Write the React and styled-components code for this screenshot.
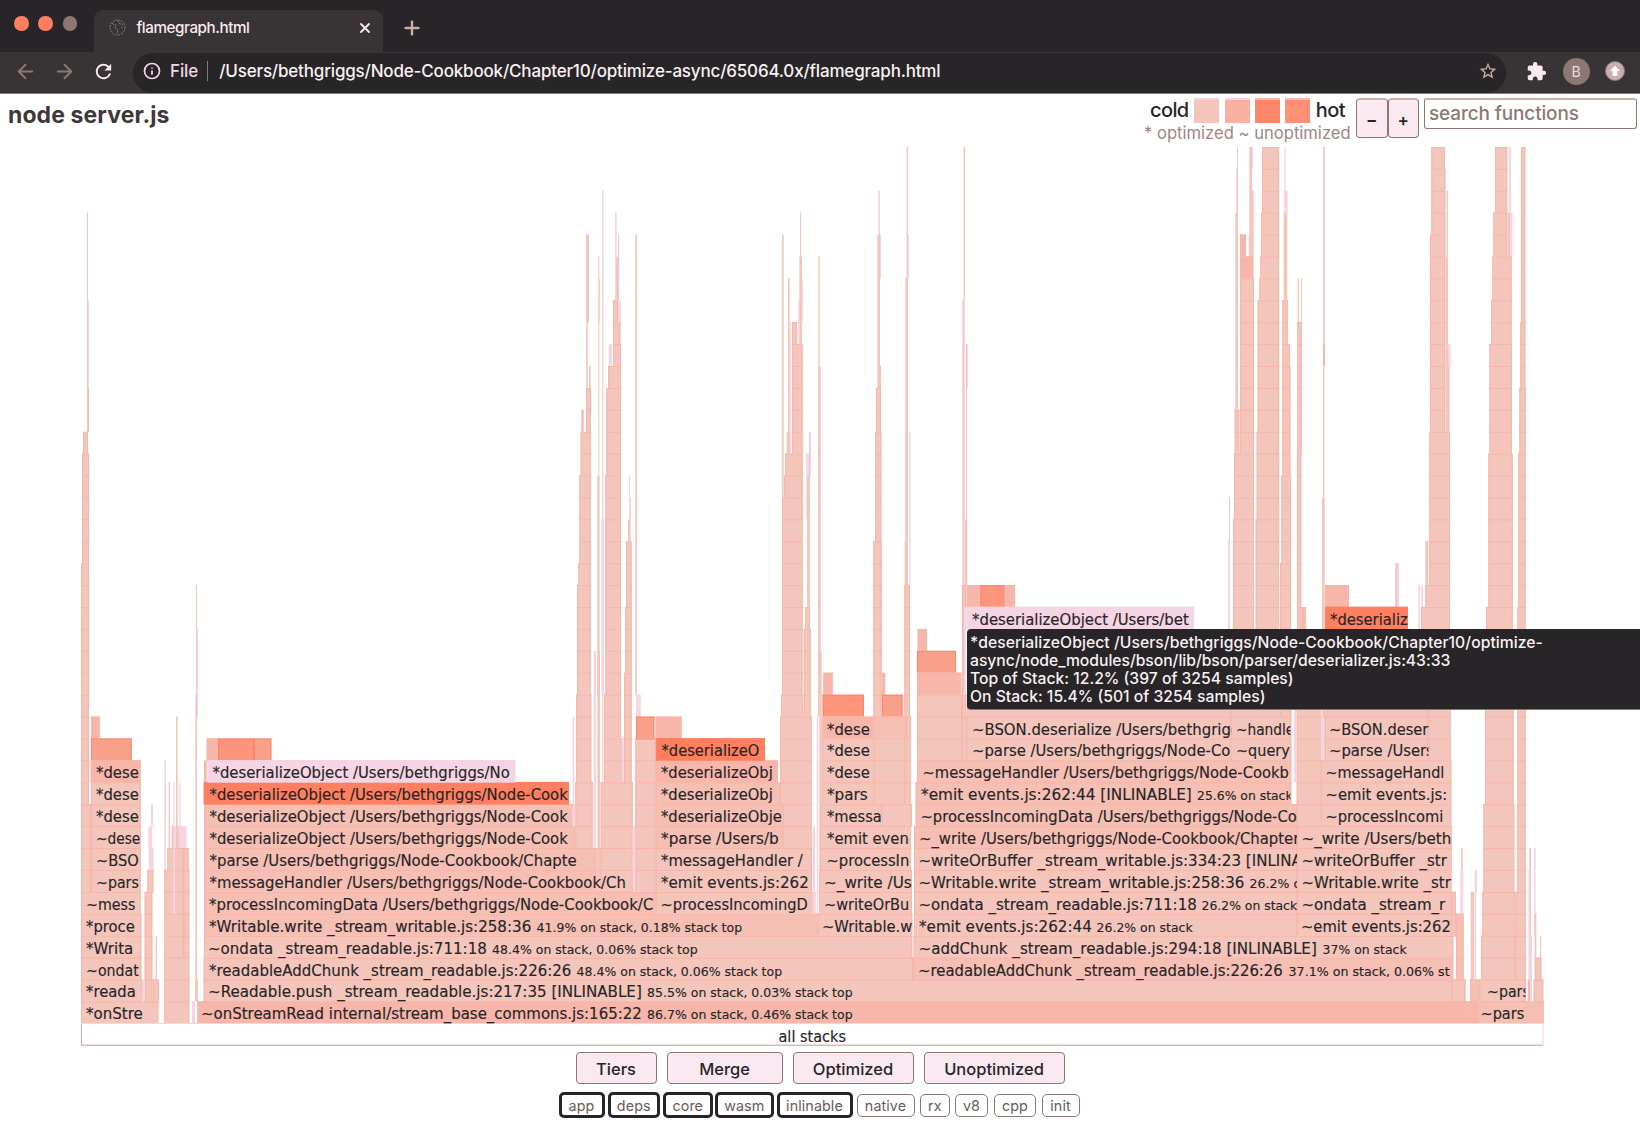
import React from "react";
import styled, { createGlobalStyle } from "styled-components";
import { ArrowLeft, ArrowRight, Plus, X, Info } from "lucide-react";
import { MdRefresh, MdExtension, MdStarBorder } from "react-icons/md";

const C = {
  ink: "#272527",
  bar: "#383334",
  mauve: "#8b7875",
  tan: "#c9aeab",
  pink: "#f5d4e3",
  light: "#f4c5bb",
  mid: "#f7b6a9",
  warm: "#f8a08a",
  hot: "#ff7f60",
};

const Global = createGlobalStyle`
  * { box-sizing: border-box; }
  html, body { margin: 0; padding: 0; background: #fff; overflow: hidden; }
  body { font-family: Inter, "Liberation Sans", sans-serif; color: ${C.ink}; }
`;

const Page = styled.div`
  position: relative;
  width: 1640px;
  height: 1124px;
  display: flex;
  flex-direction: column;
  overflow: hidden;
`;

/* ---------- browser chrome ---------- */
const TabStrip = styled.div`
  height: 52px;
  flex: none;
  display: flex;
  align-items: flex-end;
  background: ${C.ink};
`;
const Lights = styled.div`
  width: 94px;
  height: 100%;
  padding: 16px 0 0 14px;
  display: flex;
  gap: 9.8px;
`;
const Light = styled.span`
  width: 14.5px;
  height: 14.5px;
  border-radius: 50%;
  background: ${(p) => p.$color};
`;
const Tab = styled.div`
  width: 289px;
  height: 42px;
  padding: 0 10px 7px 15px;
  border-radius: 9px 9px 0 0;
  background: ${C.bar};
  display: flex;
  align-items: center;
  font-size: 15.2px;
  font-weight: 500;
  color: #fbeaf0;
`;
const TabTitle = styled.span`
  margin-left: 10.5px;
  flex: 1;
  letter-spacing: -0.42px;
`;
const NewTab = styled.div`
  padding: 0 0 13px 17.5px;
  display: flex;
  color: ${C.tan};
`;
const Toolbar = styled.div`
  height: 42px;
  flex: none;
  display: flex;
  align-items: center;
  background: ${C.bar};
  border-bottom: 1px solid ${C.mauve};
`;
const Nav = styled.div`
  width: 133px;
  padding: 0 0 3px 14px;
  display: flex;
  align-items: center;
  gap: 16px;
  color: ${C.mauve};
`;
const Omnibox = styled.div`
  width: 1373px;
  height: 40px;
  padding: 4px 8px 8px 10px;
  margin-top: 1px;
  border-radius: 20px;
  background: ${C.ink};
  display: flex;
  align-items: center;
  font-size: 17px;
  font-weight: 500;
  color: #fbf0f2;
`;
const Scheme = styled.span`
  margin-left: 9px;
  padding-right: 9px;
  border-right: 1px solid ${C.mauve};
  line-height: 20px;
  color: ${C.pink};
  font-weight: 500;
  letter-spacing: -0.1px;
`;
const Url = styled.span`
  margin-left: 11px;
  flex: 1;
  letter-spacing: -0.175px;
`;
const Extensions = styled.div`
  padding: 0 0 3px 20px;
  display: flex;
  align-items: center;
  gap: 15.7px;
  color: #fbeaf0;
`;
const Avatar = styled.div`
  width: 27px;
  height: 27px;
  border-radius: 50%;
  background: ${C.mauve};
  color: ${C.pink};
  font-size: 14px;
  display: flex;
  align-items: center;
  justify-content: center;
`;

/* ---------- page header ---------- */
const Header = styled.div`
  height: 53px;
  flex: none;
  padding: 4px 3px 0 8px;
  display: flex;
  align-items: flex-start;
`;
const Title = styled.h1`
  margin: 3px 0 0;
  flex: 1;
  font-size: 23px;
  line-height: 28px;
  font-weight: 650;
  letter-spacing: 0.1px;
  color: #40373a;
`;
const Legend = styled.div`
  width: 206px;
  margin-right: 6px;
`;
const Scale = styled.div`
  height: 25px;
  padding: 0 5px 0 6px;
  display: flex;
  justify-content: space-between;
  align-items: center;
  font-size: 20px;
  font-weight: 500;
  line-height: 25px;
  letter-spacing: -0.6px;
`;
const Swatch = styled.span`
  width: 25px;
  height: 25px;
  border-top: 2px solid ${(p) => p.$edge || C.pink};
  background: ${(p) => p.$color};
`;
const Note = styled.div`
  font-size: 16.6px;
  line-height: 20px;
  color: #a08683;
  white-space: nowrap;
`;
const Zoom = styled.button`
  width: 31.5px;
  height: 40px;
  padding: 2px 0 0;
  border: 1.5px solid ${C.mauve};
  border-top: 2px solid ${C.tan};
  border-radius: 4px;
  background: #fae9f1;
  font: 600 17px Inter, sans-serif;
  color: ${C.ink};
`;
const Search = styled.div`
  width: 213px;
  height: 31px;
  margin-left: 5px;
  padding-left: 4px;
  border: 1.5px solid ${C.mauve};
  border-top: 2px solid ${C.tan};
  border-radius: 3px;
  font-size: 18.9px;
  line-height: 28px;
  font-weight: 450;
  letter-spacing: -0.1px;
  color: ${C.mauve};
`;

/* ---------- chart ---------- */
const Chart = styled.svg`
  display: block;
  flex: none;
`;
const Label = styled.text`
  font-family: "DejaVu Sans", Verdana, sans-serif;
  font-size: ${(p) => (p.$small ? 12.8 : 15)}px;
  fill: ${C.ink};
  stroke: ${C.ink};
  stroke-width: 0.15px;
  white-space: pre;
`;

const H = 21.91;
const BASE = 1001.4;
const TOP = 147;
const rowY = (k) => BASE - k * H - TOP;

/* Frames by horizontal origin. Bounds are in thirds of a pixel:
   [left, right, top row, bottom row, tone] */
const frames = [
  [60, [
    [81, 84, 36, 26], [84, 87, 32, 28, "pink"], [84, 87, 28, 26, "mid"],
    [69, 84, 26, 25], [66, 87, 25, 20], [63, 87, 20, 9], [63, 93, 9, 5],
    [93, 119, 13, 12, "mid"], [93, 215, 12, 11, "warm"],
    [92, 242, 11, 10, "mid"], [93, 242, 10, 5],
    [63, 242, 5, 4], [63, 244, 4, 1], [63, 247, 1, 0], [63, 295, 0, -1],
    [274, 278, 9, 8], [265, 277, 8, 7, "pink"], [266, 281, 7, 6, "pink"],
    [262, 280, 6, 5], [254, 277, 5, 0], [246, 252, 1, 0, "pink"],
    [278, 296, 1, 0], [287, 291, 3, 1],
    [313, 318, 11, 6, "pink"], [326, 330, 10, 7], [340, 344, 10, 7, "pink"],
    [348, 353, 13, 8], [358, 362, 10, 7, "pink"], [334, 380, 8, 7, "pink"],
    [336, 342, 8, 7], [348, 356, 8, 7], [322, 386, 7, 6], [313, 388, 6, -1],
    [340, 345, 8, 4, "pink"], [368, 374, 7, 2, "mid"],
    [396, 405, 0, -1, "pink"], [408, 411, 19, 14], [410, 414, 17, 13, "pink"],
    [406, 411, 14, 0], [406, 414, 1, 0], [412, 4222, 0, -1, "mid"],
    [431, 4216, 1, 0], [431, 2559, 2, 1], [432, 2557, 3, 2],
    [432, 2273, 4, 3, "soft"], [432, 1787, 5, 4, "soft"],
    [432, 1718, 6, 5, "soft"], [432, 1604, 7, 6, "soft"], [432, 1546, 8, 7, "soft"],
    [432, 1543, 9, 8, "soft"], [432, 440, 11, 10, "mid"],
    [440, 474, 12, 11, "mid"], [474, 582, 12, 11, "warmhot"], [582, 634, 12, 11, "warm"],
  ]],
  [540, [
    [98, 103, 13, 8, "pink"],
    [138, 147, 35, 31], [139, 143, 31, 28, "mid"], [147, 152, 29, 27], [138, 152, 28, 26],
    [124, 131, 27, 26, "mid"], [122, 152, 26, 24], [118, 152, 24, 20], [115, 152, 20, 19],
    [111, 152, 19, 14], [108, 154, 14, 10], [106, 158, 10, 7],
    [175, 178, 34, 24], [178, 180, 33, 31], [172, 179, 24, 14], [161, 168, 16, 7, "pink"],
    [172, 180, 16, 7], [186, 191, 37, 32, "pink"], [187, 190, 32, 7], [184, 192, 22, 14, "pink"],
    [225, 230, 36, 34, "pink"], [234, 237, 35, 34], [226, 237, 34, 32], [219, 234, 32, 31],
    [234, 243, 32, 30, "pink"], [219, 240, 31, 30], [206, 216, 30, 29, "pink"], [219, 243, 30, 29],
    [204, 243, 29, 28], [199, 243, 28, 24], [196, 243, 24, 14], [192, 243, 14, 12],
    [192, 250, 12, 10], [182, 278, 10, 5], [164, 182, 7, 5],
    [267, 270, 24, 22, "pink"], [268, 273, 23, 21, "pink"], [264, 270, 22, 21],
    [258, 275, 21, 18], [255, 275, 18, 15], [252, 275, 15, 10], [246, 250, 12, 10, "pink"],
    [286, 291, 35, 14], [288, 302, 14, 13, "pink"],
    [278, 285, 8, 5, "pink"], [286, 347, 12, 5], [288, 343, 13, 12, "warm"],
    [347, 425, 13, 12, "mid"], [347, 714, 11, 10, "mid"],
    [347, 722, 10, 9, "soft"], [347, 728, 9, 8, "soft"], [347, 730, 8, 7, "soft"],
    [347, 816, 7, 6], [347, 816, 6, 5], [347, 826, 5, 4],
    [726, 731, 35, 23], [744, 749, 33, 26], [740, 750, 26, 25], [750, 753, 31, 25, "pink"],
    [756, 770, 31, 30], [780, 783, 36, 34], [778, 786, 34, 30], [786, 789, 33, 31, "pink"],
    [774, 780, 32, 30, "pink"], [756, 788, 30, 25], [735, 788, 25, 24], [732, 788, 24, 23],
    [726, 788, 23, 14], [723, 790, 14, 13], [720, 815, 13, 9], [728, 815, 9, 7],
    [807, 810, 26, 24], [810, 813, 26, 24, "pink"], [799, 808, 25, 22, "pink"],
    [801, 810, 24, 18], [796, 810, 18, 17], [792, 812, 17, 13],
    [835, 839, 34, 29], [834, 842, 29, 16], [834, 845, 16, 13], [818, 825, 8, 4, "pink"],
    [830, 835, 13, 4, "pink"], [838, 848, 13, 6],
    [1015, 1020, 37, 35, "pink"], [1020, 1023, 35, 33, "pink"], [1012, 1020, 35, 28],
    [1018, 1023, 29, 26], [1008, 1023, 28, 26], [1005, 1024, 26, 21], [1000, 1025, 21, 13],
    [1099, 1104, 39, 33, "pink"], [1102, 1104, 39, 33], [1104, 1107, 35, 33, "pink"],
    [1096, 1104, 33, 21], [1108, 1112, 26, 19, "pink"], [1094, 1104, 21, 19],
    [1093, 1110, 19, 13], [850, 878, 15, 14, "mid"], [848, 972, 14, 13, "warmhot"],
    [1026, 1036, 15, 14, "mid"], [1026, 1088, 14, 13, "warm"],
    [848, 1000, 13, 12, "mid"], [1000, 1098, 13, 12, "soft"], [1098, 1112, 13, 12],
    [848, 1003, 12, 9], [1003, 1096, 12, 9], [1096, 1112, 12, 9],
    [842, 1025, 9, 8], [1025, 1116, 9, 8], [840, 1112, 8, 7], [840, 1112, 7, 6],
    [838, 1116, 6, 5], [838, 1116, 5, 4], [834, 1117, 4, 3],
  ]],
  [860, [
    [311, 315, 39, 32], [307, 315, 32, 19, "pink"], [308, 311, 32, 19],
    [318, 323, 30, 28], [318, 321, 28, 22], [315, 322, 22, 19],
    [306, 318, 19, 12], [312, 318, 18, 14, "pink"],
    [173, 201, 17, 16, "mid"], [171, 288, 16, 15, "warm"], [171, 304, 15, 14, "mid"],
    [171, 306, 14, 11], [306, 320, 13, 11],
    [320, 361, 19, 18, "mid"], [361, 434, 19, 18, "warmhot"], [434, 465, 19, 18, "mid"],
    [320, 1112, 14, 13], [320, 1112, 13, 12], [320, 1112, 12, 11], [1112, 1294, 14, 11],
    [171, 1294, 11, 10, "soft"], [167, 1294, 10, 9, "soft"], [167, 1312, 9, 8, "soft"],
    [162, 1312, 8, 7, "soft"], [162, 1312, 7, 4], [162, 1312, 4, 3], [161, 1780, 3, 2], [159, 1780, 2, 1, "soft"],
  ]],
  [1200, [
    [87, 90, 23, 21], [84, 90, 21, 14, "pink"],
    [111, 114, 39, 36], [108, 111, 38, 36, "pink"], [106, 114, 36, 27], [104, 118, 27, 25],
    [120, 138, 35, 34, "mid"], [146, 150, 35, 34, "pink"], [148, 156, 39, 34], [156, 159, 39, 38, "pink"],
    [150, 161, 37, 34], [120, 160, 34, 33, "mid"], [120, 162, 33, 25], [102, 162, 25, 22], [99, 162, 22, 14],
    [186, 237, 39, 36], [183, 237, 36, 34], [181, 237, 34, 33], [178, 237, 33, 32],
    [173, 237, 32, 26], [170, 237, 26, 22], [167, 237, 22, 14],
    [253, 257, 39, 37, "pink"], [252, 263, 37, 36, "pink"], [251, 262, 36, 32],
    [247, 264, 32, 30], [247, 270, 30, 24], [270, 273, 29, 24, "pink"], [244, 273, 24, 20], [240, 273, 20, 13],
    [293, 297, 33, 31], [303, 306, 33, 31], [292, 305, 31, 25], [291, 304, 25, 13],
    [305, 317, 18, 17, "mid"], [282, 288, 14, 10, "pink"],
    [369, 375, 39, 30, "pink"], [370, 373, 39, 30], [369, 375, 30, 29, "mid"], [369, 373, 29, 23],
    [366, 374, 23, 13], [585, 597, 20, 18, "pink"], [587, 592, 20, 18],
    [655, 660, 19, 17, "pink"], [664, 669, 19, 17, "pink"],
    [694, 735, 39, 35], [735, 738, 38, 34, "pink"], [740, 744, 37, 34], [690, 735, 35, 26],
    [736, 744, 34, 26], [744, 752, 30, 29, "pink"], [744, 749, 29, 26],
    [688, 750, 26, 19], [676, 685, 21, 19], [676, 750, 19, 18], [663, 750, 18, 16],
    [885, 922, 39, 36], [927, 933, 39, 36, "pink"], [880, 922, 36, 34], [922, 938, 36, 34, "pink"],
    [923, 930, 36, 34], [877, 935, 34, 32], [873, 935, 32, 30], [868, 936, 30, 25],
    [865, 938, 25, 18], [858, 938, 18, 14], [855, 941, 14, 9], [850, 943, 9, 5],
    [847, 944, 5, 3], [843, 946, 3, 1],
    [963, 976, 39, 31], [961, 976, 31, 28], [958, 977, 28, 25], [955, 977, 25, 18],
    [952, 977, 18, 5], [946, 977, 5, 1],
    [375, 447, 19, 18, "mid"], [290, 370, 14, 8], [363, 375, 14, 11, "pink"],
    [370, 685, 15, 13], [374, 685, 13, 12], [374, 685, 12, 11], [685, 752, 15, 11],
    [362, 754, 11, 10], [362, 754, 10, 9], [362, 754, 9, 8],
    [291, 755, 8, 3], [755, 768, 5, 3], [783, 788, 7, 4], [781, 790, 6, 4, "pink"],
    [768, 791, 4, 1, "soft"], [755, 796, 1, 0], [826, 831, 6, 5, "pink"],
    [812, 823, 5, 1], [824, 829, 6, 1, "pink"], [810, 840, 1, 0, "soft"],
    [838, 978, 1, 0], [802, 836, 0, -1, "mid"], [833, 1031, 0, -1, "soft"],
    [988, 993, 7, 3], [985, 989, 6, 1, "pink"], [1002, 1007, 7, 3, "pink"], [988, 996, 3, 0, "pink"],
    [1004, 1009, 4, 1], [1020, 1023, 3, 1], [1005, 1024, 2, 1], [1001, 1030, 1, 0], [983, 990, 1, 0, "mid"],
  ]],
];

const tones = {
  light: C.light, mid: C.mid, pink: C.pink, warm: C.warm,
  soft: "#f5bfb4", warmhot: "#fd957c",
};

/* Solid highlighted frames: [x0, x1, row, colour] */
const highlights = [
  [203.5, 569, 10, C.hot],
  [207.5, 515.5, 11, C.pink],
  [655.7, 765, 12, C.hot],
  [966.5, 1194, 18, C.pink],
  [1325, 1408, 18, C.hot],
];

/* [x, row, text, end x, small text, small x, small end, clip x] */
const labels = [
  [97, 11, "*dese", 139], [97, 10, "*dese", 139], [97, 9, "*dese", 139], [97, 8, "~dese", 140.5],
  [97, 7, "~BSO", 139], [97, 6, "~pars", 139], [87, 5, "~mess", 135.5], [87, 4, "*proce", 135],
  [87, 3, "*Writa", 133.5], [87, 2, "~ondat", 139], [87, 1, "*reada", 136], [87, 0, "*onStre", 143],
  [213.5, 11, "*deserializeObject /Users/bethgriggs/No", 510],
  [210.5, 10, "*deserializeObject /Users/bethgriggs/Node-Cook", 568],
  [210.5, 9, "*deserializeObject /Users/bethgriggs/Node-Cook", 568],
  [210.5, 8, "*deserializeObject /Users/bethgriggs/Node-Cook", 568],
  [210.5, 7, "*parse /Users/bethgriggs/Node-Cookbook/Chapte", 577],
  [210.5, 6, "*messageHandler /Users/bethgriggs/Node-Cookbook/Ch", 626],
  [210, 5, "*processIncomingData /Users/bethgriggs/Node-Cookbook/C", 653.5],
  [210, 4, "*Writable.write _stream_writable.js:258:36", 531.5, "41.9% on stack, 0.18% stack top", 537, 742.5],
  [209, 3, "~ondata _stream_readable.js:711:18", 487, "48.4% on stack, 0.06% stack top", 492.5, 698],
  [210, 2, "*readableAddChunk _stream_readable.js:226:26", 571.5, "48.4% on stack, 0.06% stack top", 577, 782.5],
  [209, 1, "~Readable.push _stream_readable.js:217:35 [INLINABLE]", 642, "85.5% on stack, 0.03% stack top", 647.5, 853],
  [202, 0, "~onStreamRead internal/stream_base_commons.js:165:22", 642, "86.7% on stack, 0.46% stack top", 647.5, 853],
  [662.5, 12, "*deserializeO", 759.5], [662, 11, "*deserializeObj", 773], [662, 10, "*deserializeObj", 773],
  [662, 9, "*deserializeObje", 782], [662, 8, "*parse /Users/b", 779], [662, 7, "*messageHandler /", 803],
  [662, 6, "*emit events.js:262", 809], [661.5, 5, "~processIncomingD", 808],
  [828, 13, "*dese", 870], [828, 12, "*dese", 870], [828, 11, "*dese", 870], [828, 10, "*pars", 868],
  [828, 9, "*messa", 882], [828, 8, "*emit even", 909], [827.5, 7, "~processIn", 909.5],
  [825, 6, "~_write /Us", 912], [825, 5, "~writeOrBu", 909.5], [823, 4, "~Writable.w", 912.5],
  [973, 18, "*deserializeObject /Users/bet", 1189],
  [973, 13, "~BSON.deserialize /Users/bethgrigg", 1240.5, "", 0, 0, 1231.5],
  [973, 12, "~parse /Users/bethgriggs/Node-Co", 1230.5],
  [1237, 13, "~handle", 1294.5, "", 0, 0, 1290.5], [1237, 12, "~query", 1290],
  [923.5, 11, "~messageHandler /Users/bethgriggs/Node-Cookb", 1289],
  [922, 10, "*emit events.js:262:44 [INLINABLE]", 1192, "25.6% on stack", 1197.5, 1293, 1290.5],
  [921.5, 9, "~processIncomingData /Users/bethgriggs/Node-Co", 1297],
  [920, 8, "~_write /Users/bethgriggs/Node-Cookbook/Chapter", 1299.5, "", 0, 0, 1297],
  [919.5, 7, "~writeOrBuffer _stream_writable.js:334:23 [INLINA", 1302, "", 0, 0, 1297],
  [919.5, 6, "~Writable.write _stream_writable.js:258:36", 1244.5, "26.2% o", 1250, 1301.5, 1297],
  [919.5, 5, "~ondata _stream_readable.js:711:18", 1197, "26.2% on stack", 1202, 1297.5, 1299],
  [920, 4, "*emit events.js:262:44", 1092, "26.2% on stack", 1097, 1193],
  [919.5, 3, "~addChunk _stream_readable.js:294:18 [INLINABLE]", 1317, "37% on stack", 1323, 1407],
  [919, 2, "~readableAddChunk _stream_readable.js:226:26", 1283, "37.1% on stack, 0.06% st", 1289, 1450],
  [1331, 18, "*deserializ", 1408],
  [1330, 13, "~BSON.deser", 1428.5], [1330, 12, "~parse /Users", 1434, "", 0, 0, 1428.5],
  [1326.5, 11, "~messageHandl", 1444.5], [1326.5, 10, "~emit events.js:", 1447.5], [1326.5, 9, "~processIncomi", 1443.5],
  [1302.5, 8, "~_write /Users/beth", 1451.5], [1302.5, 7, "~writeOrBuffer _str", 1447],
  [1302.5, 6, "~Writable.write _str", 1451], [1302.5, 5, "~ondata _stream_r", 1445.5], [1302, 4, "~emit events.js:262", 1451],
  [1488, 1, "~pars", 1530, "", 0, 0, 1525.5], [1481.5, 0, "~pars", 1524.5],
];

function Frame({ left, right, top, bottom, tone = "light" }) {
  const w = right - left;
  const y = rowY(top);
  const h = rowY(bottom) - y;
  const wide = w >= 4 && tone !== "pink";
  const lines = [];
  if (wide) for (let k = bottom; k <= top; k++) lines.push(`M${left} ${rowY(k) + 0.5}H${right}`);
  const warm = tone === "warm" || tone === "warmhot";
  return (
    <g>
      <rect x={left} y={y} width={w} height={h} fill={tones[tone]} />
      {wide && (
        <path
          d={`${lines.join("")}M${left + 0.5} ${y}V${y + h}M${right - 0.5} ${y}V${y + h}`}
          stroke={warm ? C.hot : C.mid}
          strokeOpacity={warm ? 0.8 : 1}
          fill="none"
        />
      )}
    </g>
  );
}

function FrameLabel({ item }) {
  const [x, row, text, end, extra, ex, eEnd, clip] = item;
  const y = rowY(row);
  const width = (clip || 1640) - x + 1;
  return (
    <svg x={x - 1} y={y} width={width} height={H + 1} overflow="hidden">
      <Label x={0} y={18} textLength={end - x + 0.8} lengthAdjust="spacingAndGlyphs">{text}</Label>
      {extra && (
        <Label $small x={ex - x + 0.6} y={18} textLength={eEnd - ex} lengthAdjust="spacingAndGlyphs">{extra}</Label>
      )}
    </svg>
  );
}

function FlameGraph() {
  return (
    <Chart width="1640" height="899" viewBox="0 0 1640 899">
      {frames.map(([origin, list]) =>
        list.map(([a, b, top, bottom, tone], i) => (
          <Frame key={`${origin}-${i}`} left={origin + a / 3} right={origin + b / 3} top={top} bottom={bottom} tone={tone} />
        ))
      )}
      {highlights.map(([a, b, row, color]) => (
        <rect key={`${a}-${row}`} x={a} y={rowY(row) - 0.4} width={b - a} height={H + 0.8} fill={color} />
      ))}
      <path d="M158 876.5H164M190 876.5H197" stroke={C.ink} />
      <rect x="81.5" y="876.5" width="1461.5" height="21.5" fill="#fff" stroke={C.pink} />
      <path d="M81 898.3H1543" stroke={C.tan} />
      <path d="M81.5 877V898" stroke={C.tan} />
      <Label x="778.5" y="894.5" textLength="67.5" lengthAdjust="spacingAndGlyphs">all stacks</Label>
      {labels.map((item, i) => <FrameLabel key={i} item={item} />)}
    </Chart>
  );
}

const Tooltip = styled.div`
  position: absolute;
  left: 967px;
  top: 629px;
  width: 673px;
  height: 81px;
  padding: 4.5px 0 0 3px;
  border-radius: 4px 0 0 4px;
  border-bottom: 1px solid ${C.mauve};
  background: ${C.ink};
  color: #fbf0f3;
  font-size: 15.7px;
  font-weight: 450;
  line-height: 18.2px;
  white-space: nowrap;
`;
const TipLine = styled.div`
  letter-spacing: ${(p) => p.$track || 0}px;
`;

/* ---------- footer ---------- */
const Actions = styled.div`
  height: 32px;
  flex: none;
  margin: 6px 0 0 575.5px;
  display: flex;
  gap: 10px;
`;
const Action = styled.button`
  width: ${(p) => p.$w}px;
  height: 32px;
  padding: 1px 0 0;
  border: 1.5px solid ${C.mauve};
  border-radius: 4px;
  background: #fae9f1;
  color: ${C.ink};
  font: 500 16.5px Inter, sans-serif;
`;
const Filters = styled.div`
  height: 26px;
  flex: none;
  margin: 8px 0 0 558.5px;
  display: flex;
  align-items: center;
`;
const Filter = styled.span`
  width: ${(p) => p.$w}px;
  height: ${(p) => (p.$on ? 25.5 : 23)}px;
  margin-right: ${(p) => p.$gap}px;
  flex: none;
  display: flex;
  align-items: center;
  justify-content: center;
  border: ${(p) => (p.$on ? `3px solid ${C.ink}` : `1.5px solid ${C.mauve}`)};
  border-radius: 5px;
  font-size: 14.3px;
  letter-spacing: 0.1px;
  color: #6d5a5a;
`;

const filters = [
  ["app", 46, 3, 1], ["deps", 52.5, 3, 1], ["core", 49.5, 2.5, 1], ["wasm", 58.5, 3, 1],
  ["inlinable", 76, 4, 1], ["native", 58, 5.5, 0], ["rx", 29.5, 5.5, 0], ["v8", 33, 6, 0],
  ["cpp", 42, 5.5, 0], ["init", 38, 0, 0],
];

const Globe = () => (
  <svg width="17" height="17" viewBox="0 0 17 17" fill="none" stroke={C.mauve} strokeWidth="1">
    <circle cx="8.5" cy="8.5" r="7.5" strokeDasharray="2 1" />
    <path d="M3 4.5l4 1.5-1 3 3 2-1 4M9 1.5l1 3 4 1M12 8l2.5 2" strokeDasharray="2 1" />
  </svg>
);

const Update = () => (
  <svg width="20" height="20" viewBox="0 0 20 20">
    <circle cx="10" cy="10" r="9.5" fill={C.tan} stroke={C.mauve} />
    <path d="M10 4.5l5 5.2h-2.6V15H7.6V9.7H5z" fill="#fff" />
  </svg>
);

export default function App() {
  return (
    <Page>
      <Global />
      <TabStrip>
        <Lights>
          <Light $color={C.hot} /><Light $color={C.hot} /><Light $color={C.mauve} />
        </Lights>
        <Tab>
          <Globe />
          <TabTitle>flamegraph.html</TabTitle>
          <X size={16} strokeWidth={2.8} />
        </Tab>
        <NewTab><Plus size={22} strokeWidth={2.6} /></NewTab>
      </TabStrip>
      <Toolbar>
        <Nav>
          <ArrowLeft size={23} strokeWidth={2} />
          <ArrowRight size={23} strokeWidth={2} />
          <MdRefresh size={23} color="#fbeaf0" />
        </Nav>
        <Omnibox>
          <Info size={18} strokeWidth={2.3} color={C.pink} />
          <Scheme>File</Scheme>
          <Url>/Users/bethgriggs/Node-Cookbook/Chapter10/optimize-async/65064.0x/flamegraph.html</Url>
          <MdStarBorder size={20} color={C.tan} />
        </Omnibox>
        <Extensions>
          <MdExtension size={21} />
          <Avatar>B</Avatar>
          <Update />
        </Extensions>
      </Toolbar>
      <Header>
        <Title>node server.js</Title>
        <Legend>
          <Scale>
            <span>cold</span>
            <Swatch $color={C.light} />
            <Swatch $color="#f8b0a0" />
            <Swatch $color="#fd8668" $edge={C.mid} />
            <Swatch $color="#fc8f74" $edge={C.mid} />
            <span>hot</span>
          </Scale>
          <Note>* optimized ~ unoptimized</Note>
        </Legend>
        <Zoom>−</Zoom>
        <Zoom>+</Zoom>
        <Search>search functions</Search>
      </Header>
      <FlameGraph />
      <Actions>
        <Action $w={81}>Tiers</Action>
        <Action $w={116}>Merge</Action>
        <Action $w={121}>Optimized</Action>
        <Action $w={141}>Unoptimized</Action>
      </Actions>
      <Filters>
        {filters.map(([name, w, gap, on]) => (
          <Filter key={name} $w={w} $gap={gap} $on={on}>{name}</Filter>
        ))}
      </Filters>
      <Tooltip>
        <TipLine $track={0.05}>*deserializeObject /Users/bethgriggs/Node-Cookbook/Chapter10/optimize-</TipLine>
        <TipLine $track={-0.03}>async/node_modules/bson/lib/bson/parser/deserializer.js:43:33</TipLine>
        <TipLine>Top of Stack: 12.2% (397 of 3254 samples)</TipLine>
        <TipLine>On Stack: 15.4% (501 of 3254 samples)</TipLine>
      </Tooltip>
    </Page>
  );
}
